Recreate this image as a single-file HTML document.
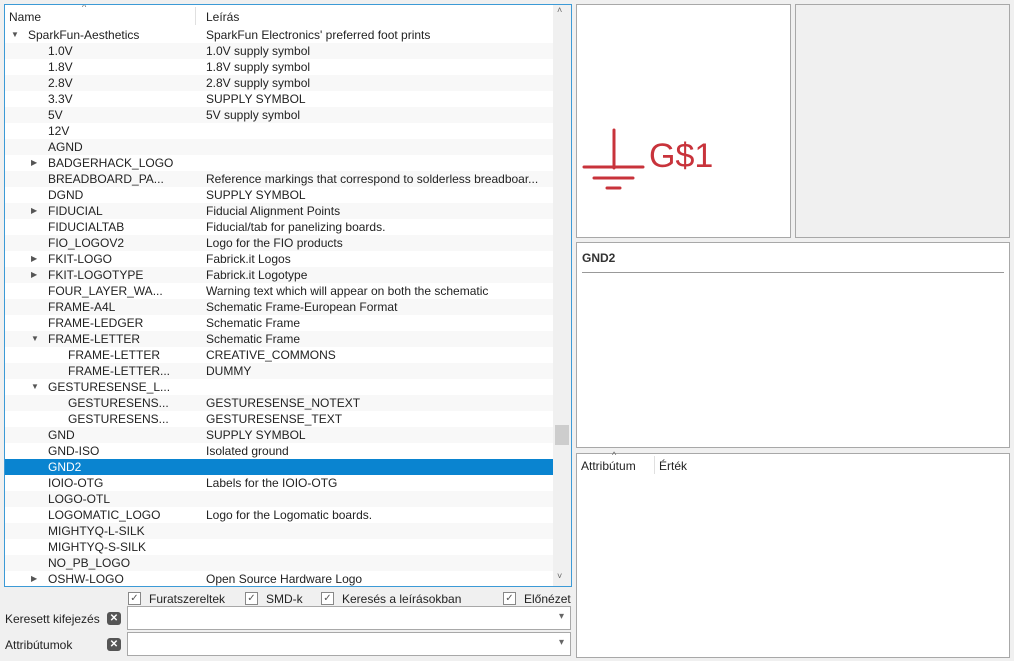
<!DOCTYPE html>
<html><head><meta charset="utf-8"><style>
*{box-sizing:border-box;margin:0;padding:0}
body{width:1014px;height:661px;background:#f0f0f0;font-family:"Liberation Sans",sans-serif;font-size:12px;color:#222;position:relative;overflow:hidden}
.abs{position:absolute}
#tree{left:4px;top:4px;width:568px;height:583px;border:1px solid #3c9ad6;background:#fff;overflow:hidden}
.hdr{position:absolute;left:0;top:0;width:548px;height:22px;background:#fff}
.hdr span{position:absolute;top:5px}
.row{position:absolute;left:0;width:548px;height:16px;line-height:16px;white-space:nowrap}
.row.alt{background:#f8f8f8}
.row.sel{background:#0a84d0;color:#fff}
.row .n{position:absolute}
.row .d{position:absolute;left:201px}
.tri{position:absolute;font-size:8px;color:#555}
#sb{position:absolute;left:548px;top:0;width:18px;height:581px;background:#f0f0f0}
.box{position:absolute;background:#fff;border:1px solid #a8a8a8}
.cb{position:absolute;top:592px;height:14px;line-height:14px;white-space:nowrap}
.cb i{position:absolute;left:0;top:0;width:13px;height:13px;border:1px solid #888;background:#fff;font-style:normal;font-size:10px;line-height:11px;text-align:center;color:#555}
.cb span{position:absolute;left:21px;top:0}
.inp{position:absolute;left:127px;width:444px;height:24px;background:#fff;border:1px solid #a8a8a8}
.inp:after{content:"▾";position:absolute;right:6px;top:4px;font-size:10px;color:#666}
.x{position:absolute;left:107px;width:14px;height:13px;background:#555;border-radius:3px;color:#fff;font-size:10px;line-height:13px;text-align:center;font-weight:bold}
</style></head><body>
<div id="tree" class="abs">
<div class="hdr"><span style="left:4px">Name</span><span style="left:201px">Leírás</span>
<div style="position:absolute;left:190px;top:2px;width:1px;height:18px;background:#e0e0e0"></div>
<div style="position:absolute;left:77px;top:-3px;font-size:9px;color:#666">^</div></div>
<div id="rows"></div>
<div id="sb"><div style="position:absolute;top:0;left:4px;font-size:9px;color:#666">˄</div><div style="position:absolute;top:420px;left:2px;width:14px;height:20px;background:#cdcdcd"></div><div style="position:absolute;top:566px;left:4px;font-size:9px;color:#666">˅</div></div>
</div>
<script>
var d=[[0,"SparkFun-Aesthetics","SparkFun Electronics' preferred foot prints","v"],[1,"1.0V","1.0V supply symbol"],[1,"1.8V","1.8V supply symbol"],[1,"2.8V","2.8V supply symbol"],[1,"3.3V","SUPPLY SYMBOL"],[1,"5V","5V supply symbol"],[1,"12V",""],[1,"AGND",""],[1,"BADGERHACK_LOGO","",">"],[1,"BREADBOARD_PA...","Reference markings that correspond to solderless breadboar..."],[1,"DGND","SUPPLY SYMBOL"],[1,"FIDUCIAL","Fiducial Alignment Points",">"],[1,"FIDUCIALTAB","Fiducial/tab for panelizing boards."],[1,"FIO_LOGOV2","Logo for the FIO products"],[1,"FKIT-LOGO","Fabrick.it Logos",">"],[1,"FKIT-LOGOTYPE","Fabrick.it Logotype",">"],[1,"FOUR_LAYER_WA...","Warning text which will appear on both the schematic"],[1,"FRAME-A4L","Schematic Frame-European Format"],[1,"FRAME-LEDGER","Schematic Frame"],[1,"FRAME-LETTER","Schematic Frame","v"],[2,"FRAME-LETTER","CREATIVE_COMMONS"],[2,"FRAME-LETTER...","DUMMY"],[1,"GESTURESENSE_L...","","v"],[2,"GESTURESENS...","GESTURESENSE_NOTEXT"],[2,"GESTURESENS...","GESTURESENSE_TEXT"],[1,"GND","SUPPLY SYMBOL"],[1,"GND-ISO","Isolated ground"],[1,"GND2",""],[1,"IOIO-OTG","Labels for the IOIO-OTG"],[1,"LOGO-OTL",""],[1,"LOGOMATIC_LOGO","Logo for the Logomatic boards."],[1,"MIGHTYQ-L-SILK",""],[1,"MIGHTYQ-S-SILK",""],[1,"NO_PB_LOGO",""],[1,"OSHW-LOGO","Open Source Hardware Logo",">"]];
var h="";d.forEach(function(r,i){var c="row"+(i==27?" sel":(i%2==1?" alt":""));var x=[23,43,63][r[0]];h+='<div class="'+c+'" style="top:'+(22+16*i)+'px">';if(r[3])h+='<span class="tri" style="left:'+(x-17)+'px">'+(r[3]=="v"?"▼":"▶")+'</span>';h+='<span class="n" style="left:'+x+'px">'+r[1]+'</span><span class="d">'+r[2]+'</span></div>';});
document.getElementById("rows").innerHTML=h;
</script>
<div class="cb" style="left:128px"><i>✓</i><span>Furatszereltek</span></div>
<div class="cb" style="left:245px"><i>✓</i><span>SMD-k</span></div>
<div class="cb" style="left:321px"><i>✓</i><span>Keresés a leírásokban</span></div>
<div class="cb" style="left:503px"><i>✓</i><span>Előnézet</span></div>
<div class="abs" style="left:5px;top:612px">Keresett kifejezés</div>
<div class="x" style="top:612px">✕</div>
<div class="inp" style="top:606px"></div>
<div class="abs" style="left:5px;top:638px">Attribútumok</div>
<div class="x" style="top:638px">✕</div>
<div class="inp" style="top:632px"></div>
<div class="box" style="left:576px;top:4px;width:215px;height:234px">
<svg width="215" height="234" style="position:absolute;left:-1px;top:-1px"><g stroke="#c8333b" stroke-width="3" stroke-linecap="round"><line x1="38" y1="126" x2="38" y2="164"/><line x1="8" y1="163" x2="67" y2="163"/><line x1="18" y1="174" x2="57" y2="174"/><line x1="31" y1="184" x2="44" y2="184"/></g>
<text x="73" y="163" fill="#c8333b" font-family="Liberation Sans" font-size="34">G$1</text></svg></div>
<div class="box" style="left:795px;top:4px;width:215px;height:234px;background:#f0f0f0"></div>
<div class="box" style="left:576px;top:242px;width:434px;height:206px">
<div style="position:absolute;left:5px;top:8px;font-weight:bold;color:#333">GND2</div>
<div style="position:absolute;left:5px;top:29px;width:422px;height:1px;background:#999"></div></div>
<div class="box" style="left:576px;top:453px;width:434px;height:205px">
<div style="position:absolute;left:4px;top:5px">Attribútum</div>
<div style="position:absolute;left:35px;top:-4px;font-size:9px;color:#666">^</div>
<div style="position:absolute;left:77px;top:2px;width:1px;height:18px;background:#e0e0e0"></div>
<div style="position:absolute;left:82px;top:5px">Érték</div></div>
</body></html>
